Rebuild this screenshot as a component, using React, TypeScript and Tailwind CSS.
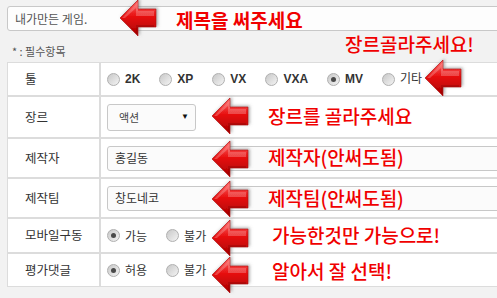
import React from "react";

const FONT = '"Liberation Sans", "Noto Sans CJK KR", sans-serif';
const KFONT = '"Noto Sans CJK KR", "Liberation Sans", sans-serif';

function Arrow({ left, top, id }: { left: number; top: number; id: string }) {
  return (
    <svg
      width={44}
      height={44}
      viewBox="0 0 44 44"
      className="absolute"
      style={{ left, top }}
    >
      <defs>
        <linearGradient id={`g${id}`} x1="0" y1="0" x2="0" y2="1">
          <stop offset="0" stopColor="#ff6b6b" />
          <stop offset="0.45" stopColor="#e81010" />
          <stop offset="1" stopColor="#a80000" />
        </linearGradient>
        <filter id={`s${id}`} x="-20%" y="-20%" width="140%" height="140%">
          <feDropShadow dx="1.5" dy="-1" stdDeviation="1.4" floodColor="#666" floodOpacity="0.55" />
        </filter>
      </defs>
      <polygon
        points="2,22 20,4 20,13 38,13 38,31 20,31 20,40"
        fill={`url(#g${id})`}
        stroke="#b31212"
        strokeWidth="0.7"
        filter={`url(#s${id})`}
      />
      <polygon points="4,22 20,6 20,15 36,15 36,20 18,20 18,12 7,22" fill="#ffffff" opacity="0.22" />
      <polygon points="4,22 18,36 18,29 36,29 36,31 20,31 20,39" fill="#700000" opacity="0.25" />
    </svg>
  );
}

function Radio({ checked }: { checked?: boolean }) {
  return (
    <span className="w-[13px] h-[13px] rounded-full border border-[#b0b0b0] bg-linear-to-br from-[#c8c8c8] to-[#f4f4f4] flex items-center justify-center shrink-0">
      {checked && <span className="w-[5px] h-[5px] rounded-full bg-[#4a4a4a]" />}
    </span>
  );
}

function RadioItem({ label, checked, bold }: { label: string; checked?: boolean; bold?: boolean }) {
  return (
    <span className="flex items-center gap-[5px] mr-[19px]">
      <Radio checked={checked} />
      <span className={`text-[12px] text-[#333] ${bold ? "font-bold" : ""}`}>{label}</span>
    </span>
  );
}

function Label({ text }: { text: string }) {
  return (
    <div className="bg-white flex items-center pl-[17px] text-[12.5px] text-[#333]" style={{ fontFamily: KFONT }}>
      {text}
    </div>
  );
}

function Note({ text, left, top, bold }: { text: string; left: number; top: number; bold?: boolean }) {
  return (
    <div
      className={`absolute text-[19px] leading-[20px] text-[#f00000] whitespace-nowrap ${bold ? "font-bold" : "font-medium"}`}
      style={{ left, top, fontFamily: KFONT }}
    >
      {text}
    </div>
  );
}

export default function App() {
  return (
    <div className="relative w-[497px] h-[298px] overflow-hidden bg-[#f2f2f2]" style={{ fontFamily: FONT }}>
      <div className="w-[530px] pt-[6px] pl-[7px]">
        <div className="h-[25px] border border-[#c8c8c8] rounded-[3px] bg-[#fdfdfd] flex items-center pl-[7px] text-[12px] text-[#555]" style={{ fontFamily: KFONT }}>
          내가만든 게임.
        </div>
        <div className="mt-[12px] h-[16px] leading-[16px] pl-[5px] text-[11px] text-[#555]" style={{ fontFamily: KFONT }}>
          * : 필수항목
        </div>
        <div className="mt-[3px] grid grid-cols-[91px_1fr] grid-rows-[32px_40px_38px_38px_33px_32px] gap-[2px] p-px bg-[#dcdcdc]">
          <Label text="툴" />
          <div className="bg-white flex items-center pl-[6px]">
            <RadioItem label="2K" bold />
            <RadioItem label="XP" bold />
            <RadioItem label="VX" bold />
            <RadioItem label="VXA" bold />
            <RadioItem label="MV" bold checked />
            <RadioItem label="기타" />
          </div>

          <Label text="장르" />
          <div className="bg-white flex items-center pl-[6px]">
            <div className="w-[89px] h-[27px] border border-[#c8c8c8] rounded-[3px] bg-[#fbfbfb] flex items-center justify-between pl-[11px] pr-[6px]">
              <span className="text-[11px] text-[#444]" style={{ fontFamily: KFONT }}>액션</span>
              <span className="text-[8px] text-[#111]">▼</span>
            </div>
          </div>

          <Label text="제작자" />
          <div className="bg-white flex items-center pl-[6px]">
            <div className="flex-1 h-[25px] border border-[#c8c8c8] rounded-[3px] bg-[#fbfbfb] flex items-center pl-[7px] text-[12px] text-[#333]" style={{ fontFamily: KFONT }}>
              홍길동
            </div>
          </div>

          <Label text="제작팀" />
          <div className="bg-white flex items-center pl-[6px]">
            <div className="flex-1 h-[25px] border border-[#c8c8c8] rounded-[3px] bg-[#fbfbfb] flex items-center pl-[7px] text-[12px] text-[#333]" style={{ fontFamily: KFONT }}>
              창도네코
            </div>
          </div>

          <Label text="모바일구동" />
          <div className="bg-white flex items-center pl-[6px]" style={{ fontFamily: KFONT }}>
            <RadioItem label="가능" checked />
            <RadioItem label="불가" />
          </div>

          <Label text="평가댓글" />
          <div className="bg-white flex items-center pl-[6px]" style={{ fontFamily: KFONT }}>
            <RadioItem label="허용" checked />
            <RadioItem label="불가" />
          </div>
        </div>
      </div>

      <Arrow id="a1" left={118} top={-4} />
      <Arrow id="a2" left={423} top={56} />
      <Arrow id="a3" left={210} top={94} />
      <Arrow id="a4" left={210} top={137} />
      <Arrow id="a5" left={210} top={177} />
      <Arrow id="a6" left={210} top={216} />
      <Arrow id="a7" left={210} top={253} />

      <Note text="제목을 써주세요" left={176} top={10} bold />
      <Note text="장르골라주세요!" left={345} top={34} />
      <Note text="장르를 골라주세요" left={268} top={106} />
      <Note text="제작자(안써도됨)" left={268} top={147} />
      <Note text="제작팀(안써도됨)" left={268} top={188} />
      <Note text="가능한것만 가능으로!" left={272} top={225} />
      <Note text="알아서 잘 선택!" left={272} top={261} />
    </div>
  );
}
